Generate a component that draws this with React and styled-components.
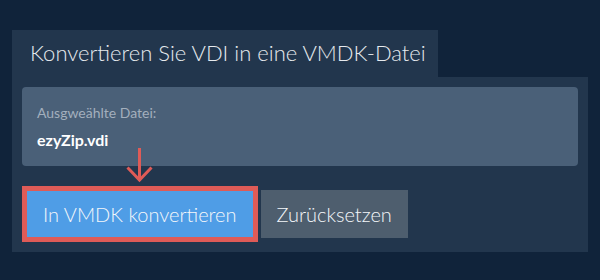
import React from "react";
import styled, { createGlobalStyle } from "styled-components";

const Global = createGlobalStyle`
  html, body { margin: 0; padding: 0; }
  body {
    background: #10233a;
    font-family: Lato, "Open Sans", sans-serif;
    width: 600px;
    height: 280px;
    overflow: hidden;
  }
`;

const Page = styled.div`
  padding: 30px 12px 0 12px;
`;

const Tab = styled.div`
  display: inline-block;
  width: 426px;
  height: 47px;
  box-sizing: border-box;
  background: #22364d;
  color: #e6eaee;
  font-size: 22px;
  font-weight: 300;
  padding: 10px 0 0 18px;
  line-height: 26px;
  white-space: nowrap;
`;

const Panel = styled.div`
  background: #22364d;
  padding: 10px;
  display: flex;
  flex-direction: column;
  gap: 20px;
`;

const FileBox = styled.div`
  background: #4a6078;
  border-radius: 4px;
  height: 79px;
  box-sizing: border-box;
  padding: 17px 15px 0 15px;
`;

const Label = styled.div`
  color: #a3afbd;
  font-size: 14px;
  line-height: 18px;
`;

const FileName = styled.div`
  color: #ffffff;
  font-size: 16px;
  font-weight: 700;
  line-height: 20px;
  margin-top: 8px;
`;

const Actions = styled.div`
  display: flex;
  align-items: center;
  gap: 3px;
  position: relative;
`;

const Button = styled.button`
  font-family: inherit;
  font-size: 20px;
  font-weight: 300;
  color: #f4f7fa;
  border: ${(p) => (p.$highlight ? "5px solid #df5b57" : "none")};
  background: ${(p) => (p.$primary ? "#4f9de6" : "#4e5e6e")};
  height: ${(p) => (p.$highlight ? "56px" : "48px")};
  padding: 0 16px 0 16px;
  margin: 0;
  cursor: pointer;
  white-space: nowrap;
`;

const Arrow = styled.svg`
  position: absolute;
  left: 104px;
  top: -38px;
  overflow: visible;
`;

export default function App() {
  return (
    <>
      <Global />
      <Page>
        <Tab>Konvertieren Sie VDI in eine VMDK-Datei</Tab>
        <Panel>
          <FileBox>
            <Label>Ausgweählte Datei:</Label>
            <FileName>ezyZip.vdi</FileName>
          </FileBox>
          <Actions>
            <Button $primary $highlight>In VMDK konvertieren</Button>
            <Button>Zurücksetzen</Button>
            <Arrow width="28" height="36" viewBox="0 0 28 36">
              <path
                d="M13.5 0 V33 M1.5 19.5 L13.5 32 L25.5 19.5"
                fill="none"
                stroke="#df5b57"
                strokeWidth="3"
              />
            </Arrow>
          </Actions>
        </Panel>
      </Page>
    </>
  );
}
